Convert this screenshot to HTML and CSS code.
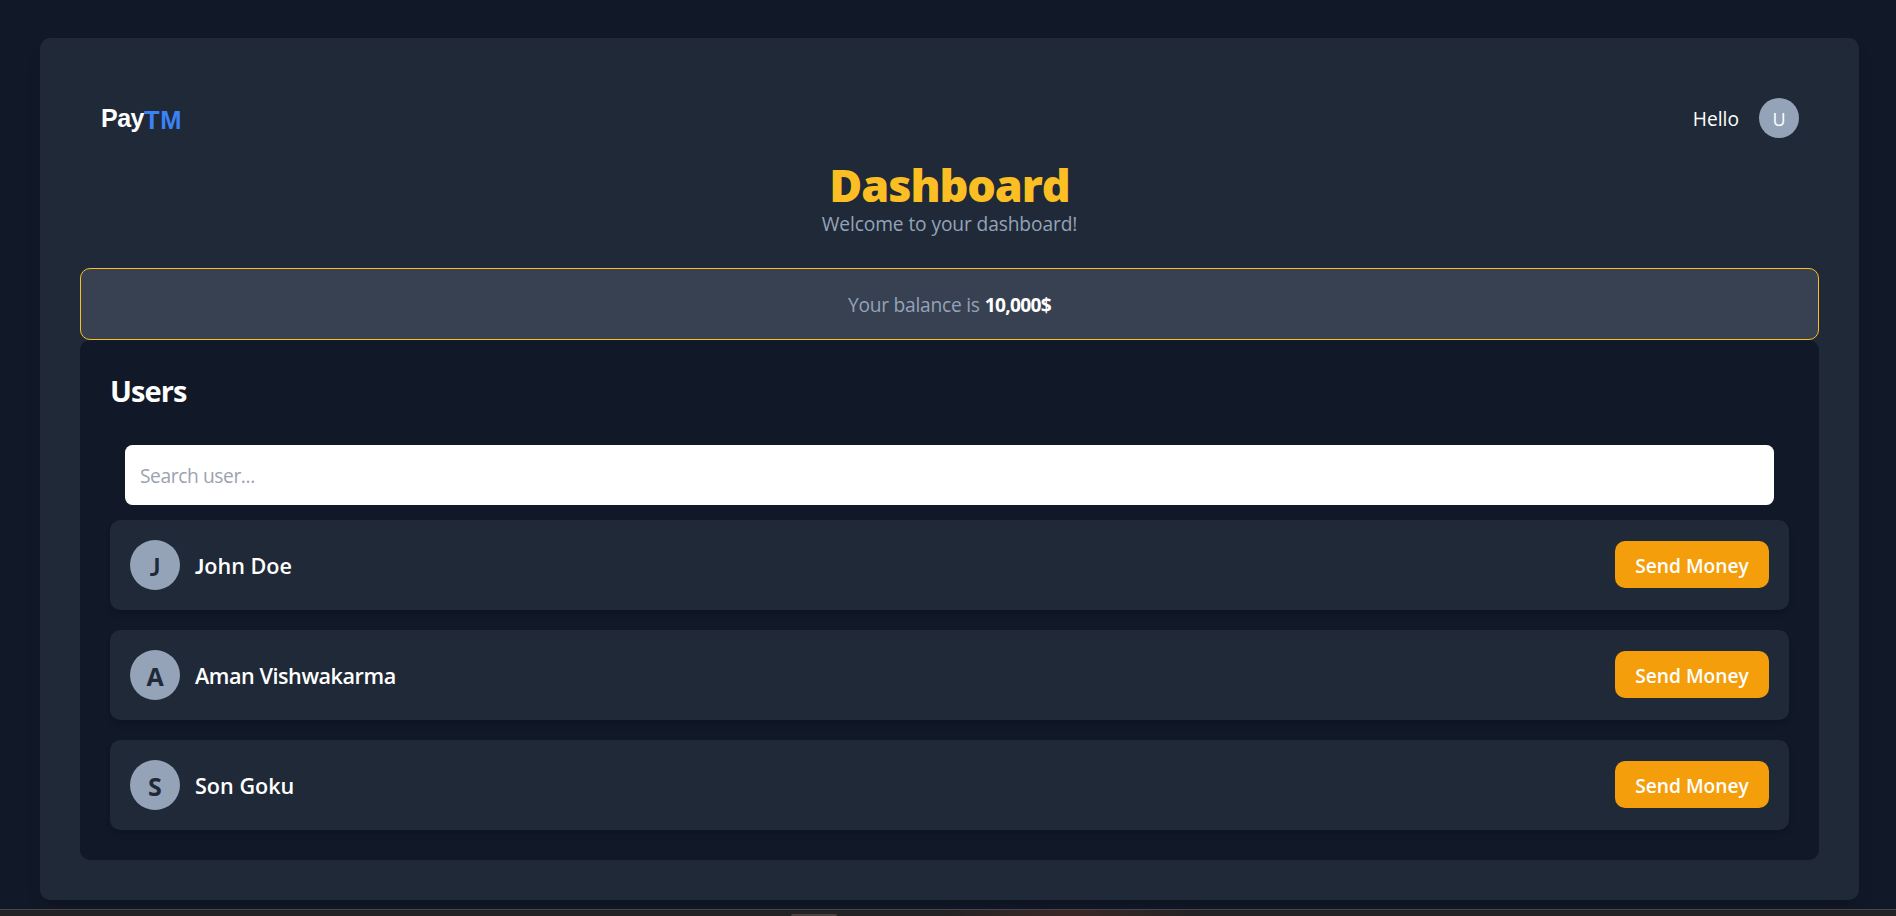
FILE: index.html
```html
<!DOCTYPE html>
<html lang="en">
<head>
<meta charset="utf-8">
<title>PayTM Dashboard</title>
<link rel="stylesheet" href="styles.css">
</head>
<body>
<main class="page">
  <div class="card">
    <header class="topbar">
      <div class="logo"><span class="logo-pay">Pay</span><span class="logo-tm">TM</span></div>
      <div class="greeting"><span class="hello">Hello</span><span class="me">U</span></div>
    </header>
    <section class="intro">
      <h1 class="title">Dashboard</h1>
      <p class="subtitle">Welcome to your dashboard!</p>
    </section>
    <section class="balance"><p><span class="balance-label">Your balance is</span> <strong class="amount">10,000$</strong></p></section>
    <section class="users">
      <h2 class="users-title">Users</h2>
      <input class="search" type="text" placeholder="Search user...">
      <ul class="list">
        <li class="row"><span class="avatar avatar-john">J</span><span class="name name-john">John Doe</span><button class="send">Send Money</button></li>
        <li class="row"><span class="avatar">A</span><span class="name name-aman">Aman Vishwakarma</span><button class="send">Send Money</button></li>
        <li class="row"><span class="avatar">S</span><span class="name">Son Goku</span><button class="send">Send Money</button></li>
      </ul>
    </section>
  </div>
</main>
<footer class="taskbar"><span class="tab"></span></footer>
</body>
</html>
```
FILE: styles.css
```css
* { box-sizing: border-box; margin: 0; padding: 0; }
body {
  height: 916px;
  overflow: hidden;
  display: flex;
  flex-direction: column;
  background: #111827;
  color: #fff;
  font: 19.2px/30px "Open Sans", "Noto Sans", sans-serif;
}
.page { height: 909px; flex: none; padding: 38px 37px 9px 40px; overflow: hidden; }
.card {
  height: 862px;
  padding: 40px;
  border-radius: 10px;
  background: #1f2937;
  box-shadow: 0 12px 19px -4px rgba(0,0,0,.1), 0 5px 7px -5px rgba(0,0,0,.1);
}
.topbar { height: 80px; padding: 0 20px; display: flex; align-items: center; justify-content: space-between; }
.logo { display: flex; font: bold 25px/35px "Liberation Sans", sans-serif; }
.logo-pay { padding: 2px 0 0 1px; letter-spacing: -.5px; }
.logo-tm { color: #3b82f6; padding-top: 4px; font-size: 25.5px; letter-spacing: .7px; }
.greeting { display: flex; align-items: center; gap: 20px; }
.hello { padding-top: 2px; }
.me {
  width: 40px; height: 40px; border-radius: 50%; padding-top: 2px;
  display: flex; align-items: center; justify-content: center;
  background: #94a3b8; font-size: 18px;
}
.intro { height: 110px; text-align: center; padding-top: 2px; }
.title { font-size: 45px; line-height: 50px; font-weight: 800; color: #fbbf24; letter-spacing: -1.1px; }
.subtitle { color: #94a3b8; letter-spacing: -.12px; line-height: 28px; }
.balance {
  height: 72px; padding-top: 2px;
  display: flex; align-items: center; justify-content: center;
  border: 1px solid #fbbf24; border-radius: 10px;
  background: #374151; color: #94a3b8;
}
.balance-label { letter-spacing: -.25px; }
.amount { color: #fff; font-weight: 700; letter-spacing: -.7px; }
.users { height: 520px; padding: 30px; border-radius: 10px; background: #111827; display: flex; flex-direction: column; }
.users-title { font-size: 29px; line-height: 40px; font-weight: 700; letter-spacing: -.9px; padding-top: 1px; height: 40px; }
.search {
  height: 60px; flex: none; margin: 35px 15px 15px; padding: 0 15px;
  border: 0; border-radius: 7.5px; background: #fff;
  font: inherit; letter-spacing: -.4px;
}
.search::placeholder { color: #9ca3af; opacity: 1; }
.list { list-style: none; display: flex; flex-direction: column; gap: 20px; }
.row {
  height: 90px; padding: 0 20px; border-radius: 10px;
  display: flex; align-items: center; background: #1f2937;
  box-shadow: 0 5px 7px -1px rgba(0,0,0,.1), 0 2px 5px -2px rgba(0,0,0,.1);
}
.avatar {
  width: 50px; height: 50px; flex: none; border-radius: 50%;
  display: flex; align-items: center; justify-content: center;
  background: #94a3b8; color: #1f2937; font-size: 25px; font-weight: 700; padding-top: 2px;
}
.avatar-john { font-family: Lato, sans-serif; }
.name { flex: 1; margin-left: 15px; padding-top: 2px; font-size: 21.6px; font-weight: 600; white-space: nowrap; }
.name-john::first-letter { font-family: Lato, sans-serif; font-weight: 700; }
.name-aman { letter-spacing: -.45px; }
.send {
  width: 154px; height: 47px; margin-bottom: 1px; padding-top: 2px; border: 0; border-radius: 10px;
  background: #f59e0b; color: #fff;
  font: 600 19.2px/30px "Open Sans", "Noto Sans", sans-serif; white-space: nowrap;
}
.taskbar {
  flex: none; height: 7px; padding: 4px 0 0 791px;
  border-top: 1px solid #47474b;
  background: radial-gradient(ellipse 130px 30px at 1070px 4px, #3b2725, rgba(35,34,36,0)), #232224;
}
.tab { display: block; width: 46px; height: 2px; background: #4a4341; border-radius: 2px 2px 0 0; }
```
